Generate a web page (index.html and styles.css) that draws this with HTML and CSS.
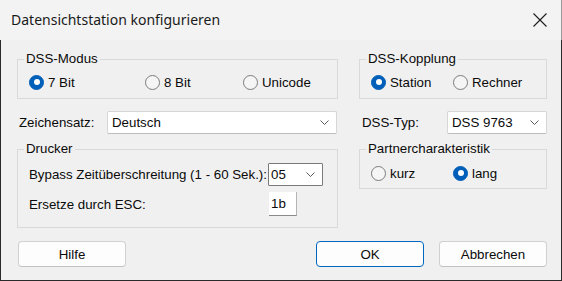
FILE: index.html
```html
<!DOCTYPE html>
<html>
<head>
<meta charset="utf-8">
<link rel="stylesheet" href="styles.css">
</head>
<body>
<div class="window">
  <div class="titlebar">
    <span class="title">Datensichtstation konfigurieren</span>
    <svg class="close" width="14" height="14" viewBox="0 0 14 14"><path d="M0.5 0.5 L13.5 13.5 M13.5 0.5 L0.5 13.5" stroke="#1b1b1b" stroke-width="1.1" fill="none"/></svg>
  </div>
  <div class="content">
    <div class="grid">
      <fieldset class="group modus">
        <legend>DSS-Modus</legend>
        <div class="radios cols-modus">
          <div class="opt"><span class="radio checked"></span><span>7 Bit</span></div>
          <div class="opt"><span class="radio"></span><span>8 Bit</span></div>
          <div class="opt"><span class="radio"></span><span>Unicode</span></div>
        </div>
      </fieldset>
      <fieldset class="group kopplung">
        <legend>DSS-Kopplung</legend>
        <div class="radios cols-right">
          <div class="opt"><span class="radio checked"></span><span>Station</span></div>
          <div class="opt"><span class="radio"></span><span>Rechner</span></div>
        </div>
      </fieldset>

      <div class="field field-left">
        <span class="lbl lbl-zs">Zeichensatz:</span>
        <div class="combo combo-zs"><span>Deutsch</span><svg class="chev" width="9" height="5" viewBox="0 0 9 5"><path d="M0.5 0.5 L4.5 4.5 L8.5 0.5" stroke="#5c5c5c" stroke-width="1" fill="none"/></svg></div>
      </div>
      <div class="field field-right">
        <span class="lbl lbl-typ">DSS-Typ:</span>
        <div class="combo combo-typ"><span>DSS 9763</span><svg class="chev" width="9" height="5" viewBox="0 0 9 5"><path d="M0.5 0.5 L4.5 4.5 L8.5 0.5" stroke="#5c5c5c" stroke-width="1" fill="none"/></svg></div>
      </div>

      <fieldset class="group drucker">
        <legend>Drucker</legend>
        <div class="form">
          <span class="flbl">Bypass Zeitüberschreitung (1 - 60 Sek.):</span>
          <div class="combo combo-05"><span>05</span><svg class="chev" width="9" height="5" viewBox="0 0 9 5"><path d="M0.5 0.5 L4.5 4.5 L8.5 0.5" stroke="#5c5c5c" stroke-width="1" fill="none"/></svg></div>
          <span class="flbl">Ersetze durch ESC:</span>
          <div class="textbox">1b</div>
        </div>
      </fieldset>
      <fieldset class="group partner">
        <legend>Partnercharakteristik</legend>
        <div class="radios cols-right">
          <div class="opt"><span class="radio"></span><span>kurz</span></div>
          <div class="opt"><span class="radio checked"></span><span>lang</span></div>
        </div>
      </fieldset>
    </div>
    <div class="buttons">
      <button class="btn">Hilfe</button>
      <span class="spacer"></span>
      <button class="btn default">OK</button>
      <button class="btn">Abbrechen</button>
    </div>
  </div>
</div>
</body>
</html>
```

FILE: styles.css
```css
* { box-sizing: border-box; }
html, body { margin: 0; padding: 0; }
body {
  width: 562px;
  height: 281px;
  overflow: hidden;
  background: #f0f0f0;
  font-family: "Liberation Sans", Arial, sans-serif;
  font-size: 13.3px;
  color: #0a0a0a;
}
.window {
  width: 562px;
  height: 281px;
  display: flex;
  flex-direction: column;
}
.titlebar {
  height: 40px;
  background: #f3f3f3;
  display: flex;
  align-items: center;
  padding: 0 14px 0 11px;
  border-right: 1px solid #9a9a9a;
}
.title {
  font-family: "Noto Sans", "Open Sans", sans-serif;
  font-size: 14px;
  color: #1a1a1a;
  flex: 1;
  margin-top: -1px;
}
.close { display: block; margin-top: -1px; }
.content {
  flex: 1;
  background: #f0f0f0;
  border-left: 1px solid #2a2a2a;
  border-right: 1px solid #2a2a2a;
  border-bottom: 1px solid #2a2a2a;
  padding: 11px 14px 12px 16px;
  display: flex;
  flex-direction: column;
}
.grid {
  display: grid;
  grid-template-columns: 321px 188px;
  column-gap: 21px;
  align-items: start;
}
.group {
  margin: 0;
  padding: 0;
  border: 1px solid #d9d9d9;
  min-inline-size: 0;
}
.group legend {
  margin-left: 6px;
  padding: 0 2px;
  line-height: 16px;
}
.modus .radios, .kopplung .radios { padding: 7px 0 8px 11px; }
.radios {
  display: grid;
  align-items: center;
}
.cols-modus { grid-template-columns: 116px 98px auto; }
.cols-right { grid-template-columns: 82px auto; }
.opt {
  display: flex;
  align-items: center;
  gap: 4px;
  height: 16px;
}
.radio {
  width: 15px;
  height: 15px;
  border-radius: 50%;
  border: 1px solid #7c7c7c;
  background: #f5f5f5;
  display: flex;
  align-items: center;
  justify-content: center;
  flex: none;
}
.radio.checked {
  background: #005fb8;
  border-color: #005fb8;
}
.radio.checked::after {
  content: "";
  width: 6px;
  height: 6px;
  border-radius: 50%;
  background: #fff;
}
.field {
  margin-top: 12px;
  display: flex;
  align-items: center;
  height: 23px;
}
.field-left { padding-left: 2px; }
.field-right { padding-left: 3px; }
.lbl-zs { width: 88px; }
.lbl-typ { width: 85px; }
.combo {
  height: 23px;
  background: #fff;
  border: 1px solid #d6d6d6;
  border-bottom-color: #bdbdbd;
  border-radius: 2px;
  display: flex;
  align-items: center;
  padding: 0 7px 0 4px;
}
.combo span { flex: 1; }
.chev { display: block; }
.combo-zs { width: 230px; }
.combo-typ { width: 100px; }
.drucker, .partner { margin-top: 7px; }
.drucker .form {
  display: grid;
  grid-template-columns: 239px auto;
  align-items: center;
  row-gap: 6px;
  padding: 6px 0 11px 11px;
  justify-items: start;
}
.combo-05 {
  width: 55px;
  border: 1px solid #7a7a7a;
  border-radius: 1px;
  padding-left: 2px;
}
.textbox {
  width: 28px;
  height: 24px;
  margin-left: 1px;
  background: #fff;
  border-right: 1px solid #b4b4b4;
  border-bottom: 1px solid #8a8a8a;
  display: flex;
  align-items: center;
  padding-left: 2px;
}
.partner .radios { padding: 8px 0 7px 11px; }
.buttons {
  margin-top: 13px;
  display: flex;
  gap: 15px;
  padding-left: 1px;
}
.spacer { flex: 1; }
.btn {
  width: 108px;
  height: 26px;
  font-family: inherit;
  font-size: inherit;
  color: #0a0a0a;
  background: #fdfdfd;
  border: 1px solid #d0d0d0;
  border-bottom-color: #c2c2c2;
  border-radius: 4px;
  padding: 0;
}
.btn.default {
  border: 1px solid #0067c0;
}
```
